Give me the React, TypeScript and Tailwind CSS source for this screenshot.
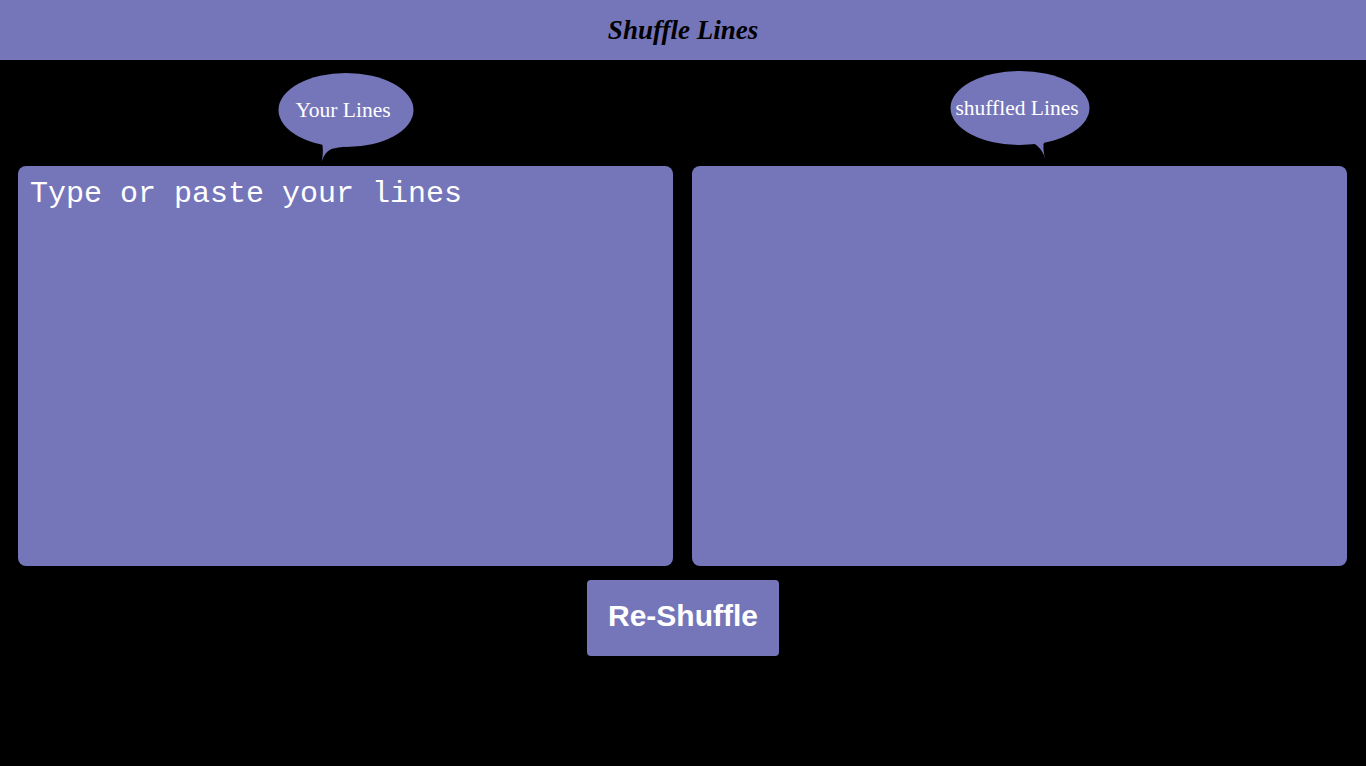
import React from "react";

const P = "#7575ba";

function Bubble({ side, label }: { side: "left" | "right"; label: string }) {
  return (
    <div className="relative w-[150px] h-[106px]">
      <svg width="150" height="106" viewBox="0 0 150 106" className="absolute left-0 top-0">
        {side === "left" ? (
          <g fill={P}>
            <ellipse cx="75" cy="50" rx="67.5" ry="37" />
            <path d="M 46 80 L 51.5 85 Q 52.5 95 50.5 101.5 Q 54 92 59.5 89.5 Q 62 88 72 87 L 72 78 Z" />
          </g>
        ) : (
          <g fill={P}>
            <ellipse cx="75" cy="48" rx="69.5" ry="37" />
            <path d="M 84 80 Q 94 86 97 91.5 Q 99.5 95 100.5 100 Q 98 91 98.5 84 Q 100 81 106 76 L 90 76 Z" />
          </g>
        )}
      </svg>
      <span
        className={`absolute left-0 w-[145px] text-center text-white text-[21.5px] leading-none ${
          side === "left" ? "top-[40px]" : "top-[38px]"
        }`}
        style={{ fontFamily: '"Liberation Serif", "Times New Roman", serif' }}
      >
        {label}
      </span>
    </div>
  );
}

export default function App() {
  return (
    <div className="w-[1366px] h-[766px] bg-black overflow-hidden">
      <header className="h-[60px] bg-[#7575ba] flex items-center justify-center">
        <h1
          className="text-[27px] font-bold italic text-black leading-none"
          style={{ fontFamily: '"Liberation Serif", "Times New Roman", serif' }}
        >
          Shuffle Lines
        </h1>
      </header>
      <div className="flex gap-[19px] pl-[18px] pr-[19px]">
        <div className="flex-1 flex flex-col items-center">
          <Bubble side="left" label="Your Lines" />
          <textarea
            className="w-full h-[400px] bg-[#7575ba] rounded-[8px] border-0 outline-none resize-none text-white placeholder:text-white text-[30px] leading-[34px] px-[12px] pt-[11px] block"
            style={{ fontFamily: '"Liberation Mono", "Courier New", monospace' }}
            placeholder="Type or paste your lines"
          />
        </div>
        <div className="flex-1 flex flex-col items-center">
          <Bubble side="right" label="shuffled Lines" />
          <textarea
            readOnly
            className="w-full h-[400px] bg-[#7575ba] rounded-[8px] border-0 outline-none resize-none text-white text-[30px] leading-[34px] px-[12px] pt-[11px] block"
            style={{ fontFamily: '"Liberation Mono", "Courier New", monospace' }}
          />
        </div>
      </div>
      <div className="flex justify-center mt-[14px]">
        <button
          className="w-[192px] h-[76px] bg-[#7575ba] rounded-[4px] text-white font-bold text-[30px] leading-none pb-[4px]"
          style={{ fontFamily: '"Liberation Sans", Arial, sans-serif' }}
        >
          Re-Shuffle
        </button>
      </div>
    </div>
  );
}
